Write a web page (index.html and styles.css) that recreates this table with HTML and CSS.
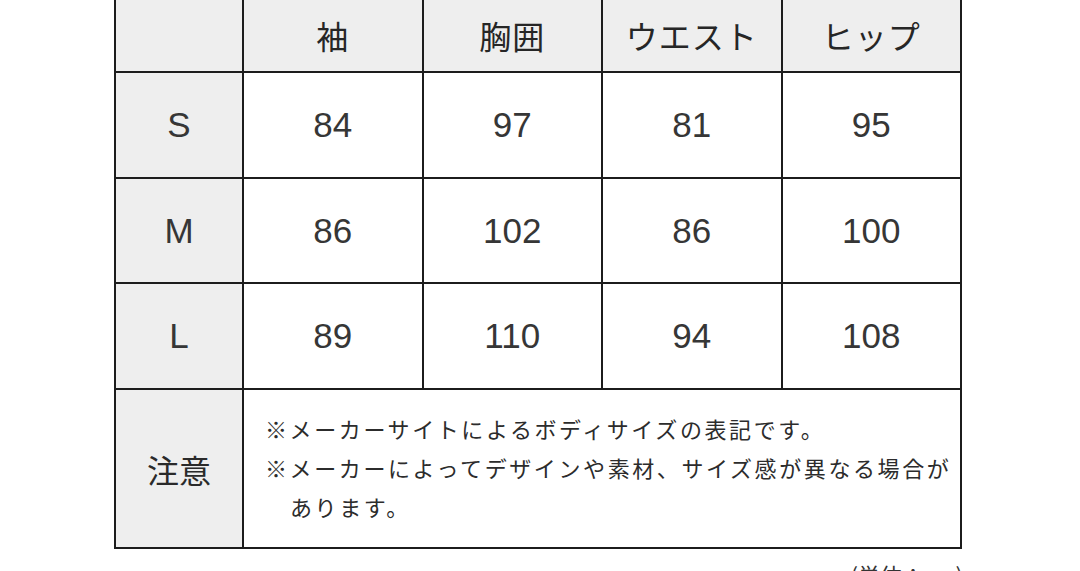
FILE: index.html
```html
<!DOCTYPE html>
<html lang="ja">
<head>
<meta charset="utf-8">
<link rel="stylesheet" href="styles.css">
</head>
<body>
<div class="wrap">
  <table class="size">
    <colgroup>
      <col class="c-label">
      <col class="c-val"><col class="c-val"><col class="c-val"><col class="c-val">
    </colgroup>
    <tr class="r-head">
      <th class="lab"></th>
      <th class="hd">袖</th>
      <th class="hd">胸囲</th>
      <th class="hd">ウエスト</th>
      <th class="hd">ヒップ</th>
    </tr>
    <tr class="r-data">
      <th class="lab">S</th><td>84</td><td>97</td><td>81</td><td>95</td>
    </tr>
    <tr class="r-data r-mid">
      <th class="lab">M</th><td>86</td><td>102</td><td>86</td><td>100</td>
    </tr>
    <tr class="r-data">
      <th class="lab">L</th><td>89</td><td>110</td><td>94</td><td>108</td>
    </tr>
    <tr class="r-note">
      <th class="lab jp">注意</th>
      <td colspan="4" class="note">
        <p>※メーカーサイトによるボディサイズの表記です。</p>
        <p>※メーカーによってデザインや素材、サイズ感が異なる場合があります。</p>
      </td>
    </tr>
  </table>
  <div class="unit">(単位：cm)</div>
</div>
</body>
</html>
```
FILE: styles.css
```css
html, body {
  margin: 0;
  padding: 0;
  background: #ffffff;
}
body {
  font-family: "Noto Sans CJK JP", "Noto Sans", sans-serif;
  color: #222222;
  overflow: hidden;
}
.wrap {
  width: 846px;
  margin: -3px 0 0 114px;
}
.size {
  width: 846px;
  border-collapse: collapse;
  table-layout: fixed;
}
.c-label { width: 128px; }
.c-val { width: 179.5px; }
.size th, .size td {
  border: 2px solid #1c1c1c;
  padding: 0;
  text-align: center;
  vertical-align: middle;
  font-weight: 400;
}
.hd, .lab {
  background: #eeeeee;
}
.hd {
  font-size: 32px;
  letter-spacing: 1px;
  color: #262626;
}
.r-head { height: 74px; }
.r-data { height: 106px; }
.r-mid { height: 105px; }
.r-note { height: 159px; }
.size td {
  font-size: 35px;
  color: #363636;
  font-family: "Liberation Sans", Arial, sans-serif;
}
.lab {
  font-size: 35px;
  color: #363636;
  font-family: "Liberation Sans", Arial, sans-serif;
}
.lab.jp {
  font-family: "Noto Sans CJK JP", sans-serif;
  font-size: 32px;
  color: #2a2a2a;
}
.size td.note {
  text-align: left;
  font-family: "Noto Sans CJK JP", sans-serif;
  font-weight: 400;
  font-size: 22px;
  letter-spacing: 2.6px;
  line-height: 39px;
  color: #2c2c2c;
  padding: 0 3px 3px 21px;
}
.note p {
  margin: 0;
  padding-left: 25px;
  text-indent: -25px;
}
.unit {
  text-align: right;
  font-size: 22px;
  line-height: 30px;
  padding-top: 10px;
  margin-right: -3px;
  color: #333333;
}
```
